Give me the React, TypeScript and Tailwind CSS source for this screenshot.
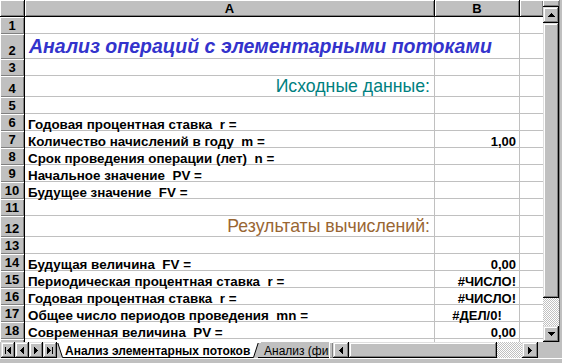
import React from "react";

type Row = {
  n: number;
  h: number;
  a?: string;
  aKind?: "title" | "teal" | "brown" | "label";
  b?: string;
  bAlign?: "right" | "center";
};

const rows: Row[] = [
  { n: 1, h: 17 },
  { n: 2, h: 25, a: "Анализ операций с элементарными потоками", aKind: "title" },
  { n: 3, h: 17 },
  { n: 4, h: 21, a: "Исходные данные:", aKind: "teal" },
  { n: 5, h: 17 },
  { n: 6, h: 17, a: "Годовая процентная ставка  r =", aKind: "label" },
  { n: 7, h: 17, a: "Количество начислений в году  m =", aKind: "label", b: "1,00" },
  { n: 8, h: 17, a: "Срок проведения операции (лет)  n =", aKind: "label" },
  { n: 9, h: 17, a: "Начальное значение  PV =", aKind: "label" },
  { n: 10, h: 17, a: "Будущее значение  FV =", aKind: "label" },
  { n: 11, h: 17 },
  { n: 12, h: 21, a: "Результаты вычислений:", aKind: "brown" },
  { n: 13, h: 17 },
  { n: 14, h: 17, a: "Будущая величина  FV =", aKind: "label", b: "0,00" },
  { n: 15, h: 17, a: "Периодическая процентная ставка  r =", aKind: "label", b: "#ЧИСЛО!" },
  { n: 16, h: 17, a: "Годовая процентная ставка  r =", aKind: "label", b: "#ЧИСЛО!" },
  { n: 17, h: 17, a: "Общее число периодов проведения  mn =", aKind: "label", b: "#ДЕЛ/0!", bAlign: "center" },
  { n: 18, h: 17, a: "Современная величина  PV =", aKind: "label", b: "0,00" },
  { n: 19, h: 17 },
];

const bevel = "shadow-[inset_1px_1px_0_#ffffff,inset_-1px_-1px_0_#808080]";
const btn =
  "bg-[#c0c0c0] shadow-[inset_-1px_-1px_0_#000000,inset_1px_1px_0_#dfdfdf,inset_-2px_-2px_0_#808080,inset_2px_2px_0_#ffffff]";
const dither =
  "bg-[repeating-conic-gradient(#c0c0c0_0_25%,#ffffff_0_50%)] bg-[length:2px_2px]";

function Tri({ dir }: { dir: "up" | "down" | "left" | "right" }) {
  const pts: Record<string, string> = {
    up: "3.5,0 7,4 0,4",
    down: "0,0 7,0 3.5,4",
    left: "4,0 4,7 0,3.5",
    right: "0,0 0,7 4,3.5",
  };
  const w = dir === "up" || dir === "down" ? 7 : 4;
  const h = dir === "up" || dir === "down" ? 4 : 7;
  return (
    <svg width={w} height={h} viewBox={`0 0 ${w} ${h}`} shapeRendering="crispEdges">
      <polygon points={pts[dir]} fill="#000" />
    </svg>
  );
}

function NavBtn({ kind }: { kind: "first" | "prev" | "next" | "last" }) {
  return (
    <div className={`w-[14px] h-full flex items-center justify-center ${btn}`}>
      <div className="flex items-center">
        {kind === "first" && <div className="w-[1px] h-[7px] bg-black mr-[1px]" />}
        <Tri dir={kind === "first" || kind === "prev" ? "left" : "right"} />
        {kind === "last" && <div className="w-[1px] h-[7px] bg-black ml-[1px]" />}
      </div>
    </div>
  );
}

function ACell({ r }: { r: Row }) {
  let content: React.ReactNode = null;
  let cls = "pl-[3px]";
  if (r.aKind === "title") {
    cls = "pl-[4px] pb-[1px]";
    content = (
      <span className="text-[19.5px] leading-[22px] font-bold italic text-[#3333cc] whitespace-pre">{r.a}</span>
    );
  } else if (r.aKind === "teal") {
    cls = "justify-end pr-[4px]";
    content = <span className="text-[17.7px] leading-[19px] text-[#008080] whitespace-pre">{r.a}</span>;
  } else if (r.aKind === "brown") {
    cls = "justify-end pr-[4px]";
    content = <span className="text-[17.7px] leading-[19px] text-[#996633] whitespace-pre">{r.a}</span>;
  } else if (r.aKind === "label") {
    content = <span className="text-[13.4px] leading-[11px] font-bold text-black whitespace-pre">{r.a}</span>;
  }
  return (
    <div className={`w-[410px] h-full flex items-end border-r border-b border-[#c0c0c0] ${cls}`}>{content}</div>
  );
}

function BCell({ r }: { r: Row }) {
  return (
    <div
      className={`w-[85px] h-full flex items-end border-r border-b border-[#c0c0c0] ${
        r.bAlign === "center" ? "justify-center" : "justify-end pr-[3px]"
      }`}
    >
      {r.b && <span className="text-[13px] leading-[11px] font-bold text-black whitespace-pre">{r.b}</span>}
    </div>
  );
}

export default function App() {
  return (
    <div className="w-[562px] h-[363px] bg-[#c0c0c0] flex flex-col overflow-hidden font-['Liberation_Sans',Arial,sans-serif] select-none">
      <div className="flex h-[342px]">
        {/* Grid */}
        <div className="w-[543px] h-full overflow-hidden bg-white flex flex-col">
          {/* Column header */}
          <div className="flex h-[17px] shrink-0 border-b border-black bg-[#c0c0c0]">
            <div className={`w-[25px] h-full border-r border-black ${bevel}`} />
            <div className={`w-[410px] h-full border-r border-black flex items-center justify-center ${bevel}`}>
              <span className="text-[13px] leading-[15px] font-bold text-black">A</span>
            </div>
            <div className={`w-[85px] h-full border-r border-black flex items-center justify-center ${bevel}`}>
              <span className="text-[13px] leading-[15px] font-bold text-black">B</span>
            </div>
            <div className={`flex-1 h-full ${bevel}`} />
          </div>
          {rows.map((r) => (
            <div key={r.n} className="flex shrink-0" style={{ height: r.h }}>
              <div
                className={`w-[25px] h-full bg-[#c0c0c0] border-r border-black flex items-end justify-center pb-[1px] ${bevel}`}
              >
                <span className="text-[13px] leading-[15px] font-bold text-black">{r.n}</span>
              </div>
              <ACell r={r} />
              <BCell r={r} />
              <div className="flex-1 h-full border-b border-[#c0c0c0]" />
            </div>
          ))}
        </div>
        {/* Vertical scrollbar */}
        <div className="w-[16px] h-full flex flex-col">
          <div className={`h-[7px] shrink-0 ${bevel} border-b border-black`} />
          <div className={`h-[16px] shrink-0 flex items-center justify-center ${btn}`}>
            <Tri dir="up" />
          </div>
          <div className={`h-[275px] shrink-0 ${btn}`} />
          <div className={`flex-1 ${dither}`} />
          <div className={`h-[16px] shrink-0 flex items-center justify-center ${btn}`}>
            <Tri dir="down" />
          </div>
        </div>
        <div className="flex-1 h-full bg-[#c0c0c0] border-l border-[#808080]" />
      </div>
      {/* Bottom bar: tabs + horizontal scrollbar */}
      <div className="flex h-[16px] shrink-0">
        <div className="flex h-full pl-[1px]">
          <NavBtn kind="first" />
          <NavBtn kind="prev" />
          <NavBtn kind="next" />
          <NavBtn kind="last" />
        </div>
        <div className="relative w-[272px] h-full overflow-hidden">
          {/* inactive tab */}
          <svg className="absolute left-[196px] top-0" width="90" height="16" shapeRendering="crispEdges">
            <polygon points="0,0 90,0 90,15 5,15" fill="#c0c0c0" />
            <line x1="5" y1="15" x2="90" y2="15" stroke="#000" />
          </svg>
          <div className="absolute left-[207px] top-[1px] h-full flex items-center">
            <span className="text-[12px] leading-[14px] text-black whitespace-pre">Анализ (финансовые функции)</span>
          </div>
          {/* active tab */}
          <svg className="absolute left-0 top-0" width="204" height="16">
            <polygon points="0.5,0 5.5,15.5 196.5,15.5 201.5,0" fill="#ffffff" stroke="#000" strokeWidth="1" />
            <line x1="0" y1="0.5" x2="204" y2="0.5" stroke="#ffffff" />
          </svg>
          <div className="absolute left-[8px] top-[1px] h-full flex items-center">
            <span className="text-[12px] leading-[14px] font-bold text-black whitespace-pre">
              Анализ элементарных потоков
            </span>
          </div>
        </div>
        <div className={`w-[4px] h-full ${bevel}`} />
        <div className={`w-[16px] h-full flex items-center justify-center ${btn}`}>
          <Tri dir="left" />
        </div>
        <div className={`w-[148px] h-full ${btn}`} />
        <div className={`w-[25px] h-full ${dither}`} />
        <div className={`w-[16px] h-full flex items-center justify-center ${btn}`}>
          <Tri dir="right" />
        </div>
        <div className="flex-1 h-full" />
      </div>
      <div className="flex-1 border-t border-white" />
    </div>
  );
}
